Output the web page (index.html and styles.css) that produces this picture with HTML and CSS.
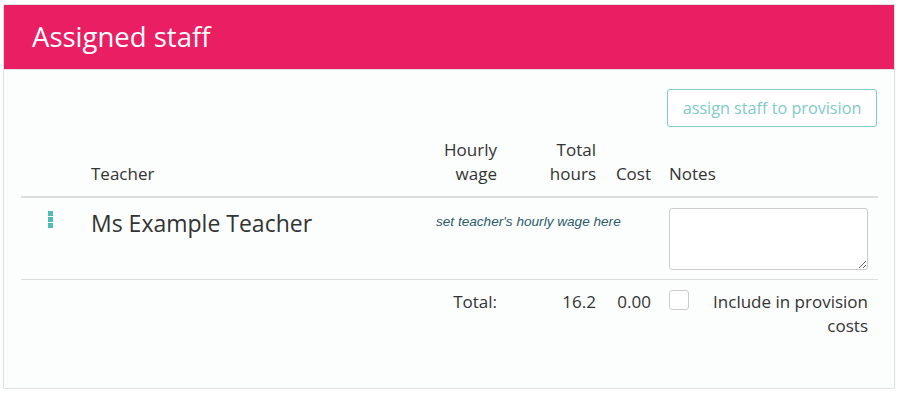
FILE: index.html
```html
<!DOCTYPE html>
<html>
<head>
<meta charset="utf-8">
<link rel="stylesheet" href="styles.css">
</head>
<body>
<div class="card">
  <div class="card-head">Assigned staff</div>
  <div class="card-body">
    <div class="actions">
      <button class="btn-assign">assign staff to provision</button>
    </div>
    <div class="staff-table">
      <div class="row head-row">
        <div class="cell"></div>
        <div class="cell">Teacher</div>
        <div class="cell right">Hourly<br>wage</div>
        <div class="cell right">Total<br>hours</div>
        <div class="cell right">Cost</div>
        <div class="cell notes">Notes</div>
      </div>
      <div class="row body-row">
        <div class="cell handle-cell"><span class="handle"><i></i><i></i><i></i></span></div>
        <div class="cell teacher">Ms Example Teacher</div>
        <div class="cell hint">set teacher's hourly wage here</div>
        <div class="cell notes"><textarea class="notes-input"></textarea></div>
      </div>
      <div class="row total-row">
        <div class="cell"></div>
        <div class="cell"></div>
        <div class="cell right">Total:</div>
        <div class="cell right">16.2</div>
        <div class="cell right">0.00</div>
        <div class="cell notes include">
          <span class="check"></span>
          <span class="include-label">Include in provision costs</span>
        </div>
      </div>
    </div>
  </div>
</div>
</body>
</html>
```
FILE: styles.css
```css
html, body {
  margin: 0;
  padding: 0;
  background: #ffffff;
}
body {
  font-family: "Open Sans", "Noto Sans", sans-serif;
  color: #333333;
  padding: 4px 0 0 3px;
}
.card {
  width: 892px;
  border: 1px solid #dfe3e3;
  border-radius: 2px;
  background: #fcfefe;
  box-shadow: 0 1px 2px rgba(0,0,0,0.08);
  box-sizing: border-box;
  height: 385px;
  display: flex;
  flex-direction: column;
}
.card-head {
  background: #e91e63;
  color: #ffffff;
  font-size: 27.5px;
  line-height: 64px;
  height: 64px;
  padding-left: 28px;
  border-bottom: 1px solid #dfe3e3;
}
.card-body {
  padding: 19px 16px 0 17px;
}
.actions {
  display: flex;
  justify-content: flex-end;
  padding-right: 1px;
}
.btn-assign {
  font-family: "Open Sans", "Noto Sans", sans-serif;
  font-size: 16.2px;
  color: #7fcbc5;
  background: #ffffff;
  border: 1px solid #80cbc4;
  border-radius: 3px;
  height: 38px;
  width: 210px;
  padding: 0;
  line-height: 36px;
}
.staff-table {
  margin-top: 11px;
  font-size: 17px;
  line-height: 24px;
}
.row {
  display: grid;
  grid-template-columns: 62px 342px 80px 99px 55px 219px;
}
.cell {
  padding: 0 8px;
}
.cell.right {
  text-align: right;
}
.cell.notes {
  padding: 0 10px;
}
.head-row {
  align-items: end;
  padding: 0 0 10px;
  border-bottom: 2px solid #dddddd;
}
.body-row {
  padding: 10px 0 9px;
  border-bottom: 1px solid #dddddd;
}
.handle-cell {
  padding: 3px 0 0 27px;
}
.handle {
  display: flex;
  flex-direction: column;
  gap: 1px;
  width: 5px;
}
.handle i {
  display: block;
  width: 5px;
  height: 5px;
  background: #4fbdb6;
}
.teacher {
  font-size: 23px;
  line-height: 30px;
  color: #333;
}
.hint {
  grid-column: span 3;
  font-family: "Liberation Sans", Arial, sans-serif;
  font-style: italic;
  font-size: 13.6px;
  line-height: 24px;
  color: #2d5a68;
  padding-left: 11px;
  padding-top: 2px;
}
.notes-input {
  display: block;
  width: 199px;
  height: 62px;
  box-sizing: border-box;
  border: 1px solid #cccccc;
  border-radius: 3px;
  background: #ffffff;
  margin: 0;
  resize: vertical;
}
.total-row {
  padding-top: 10px;
}
.include {
  display: flex;
  align-items: flex-start;
  justify-content: space-between;
}
.check {
  width: 18px;
  height: 18px;
  border: 1px solid #cccccc;
  border-radius: 3px;
  background: #ffffff;
  flex: none;
}
.include-label {
  text-align: right;
  width: 170px;
}
```
